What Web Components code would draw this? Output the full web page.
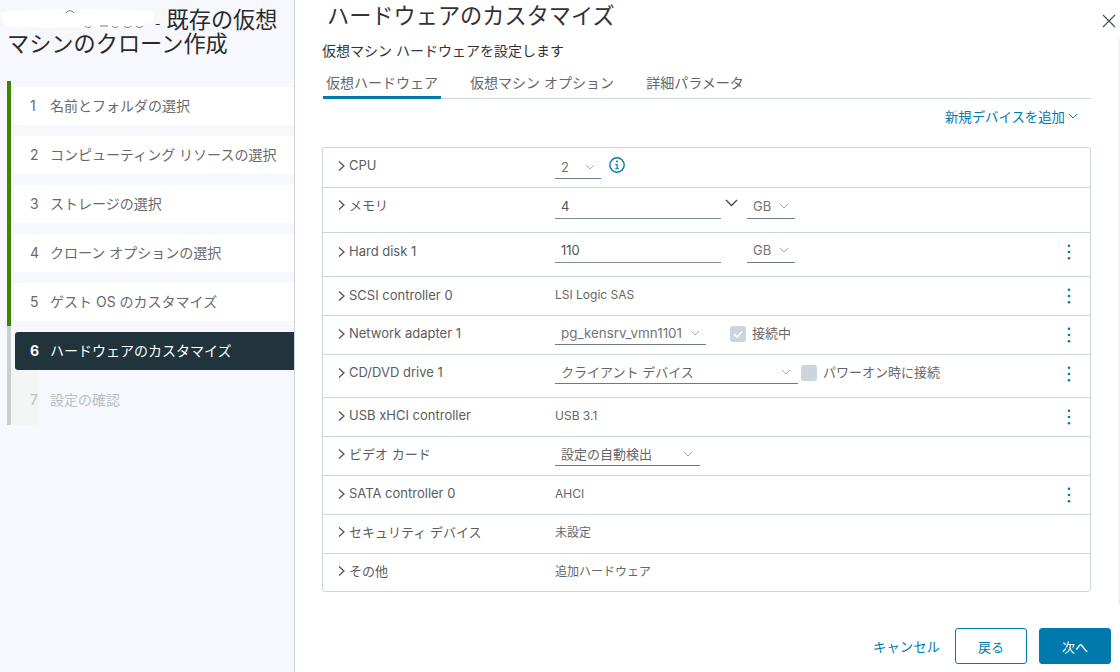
<!DOCTYPE html>
<html lang="ja">
<head>
<meta charset="utf-8">
<title>ハードウェアのカスタマイズ</title>
<style>
    html, body {
        margin: 0;
        height: 100%;
        background: #fff;
        overflow: hidden;
        font-family: Inter, "Noto Sans CJK JP", sans-serif;
        color: #565656;
    }
</style>
</head>
<body>
<wizard-dialog>
    <wizard-nav slot="nav">
        <wizard-step num="1" state="done">名前とフォルダの選択</wizard-step>
        <wizard-step num="2" state="done">コンピューティング リソースの選択</wizard-step>
        <wizard-step num="3" state="done">ストレージの選択</wizard-step>
        <wizard-step num="4" state="done">クローン オプションの選択</wizard-step>
        <wizard-step num="5" state="done">ゲスト OS のカスタマイズ</wizard-step>
        <wizard-step num="6" state="active">ハードウェアのカスタマイズ</wizard-step>
        <wizard-step num="7" state="disabled">設定の確認</wizard-step>
    </wizard-nav>

    <hw-tabs slot="tabs">
        <span class="on" style="width:118px">仮想ハードウェア</span>
        <span style="width:144px;margin-left:29px">仮想マシン オプション</span>
        <span style="width:98px;margin-left:32px">詳細パラメータ</span>
    </hw-tabs>

    <hw-table>
        <hw-row label="CPU" style="height:40px">
            <drop-select style="width:46px;margin-top:7px" size="24">2</drop-select>
            <info-icon style="margin:9px 0 0 8px"></info-icon>
        </hw-row>
        <hw-row label="メモリ" style="height:45px;--lt:6px">
            <text-field style="width:166px;margin-top:6px">4</text-field>
            <dark-chevron></dark-chevron>
            <drop-select style="width:48px;margin:6px 0 0 0" size="25">GB</drop-select>
        </hw-row>
        <hw-row label="Hard disk 1" menu style="height:44px;--lt:8px">
            <text-field style="width:166px;margin-top:5px">110</text-field>
            <drop-select style="width:48px;margin:5px 0 0 26px" size="25">GB</drop-select>
        </hw-row>
        <hw-row label="SCSI controller 0" menu style="height:39px;--lt:8px">
            <small-val>LSI Logic SAS</small-val>
        </hw-row>
        <hw-row label="Network adapter 1" menu style="height:39px">
            <drop-select style="width:151px;margin-top:5px" size="24" tiny>pg_kensrv_vmn1101</drop-select>
            <check-box checked style="margin:10px 0 0 24px">接続中</check-box>
        </hw-row>
        <hw-row label="CD/DVD drive 1" menu style="height:43px">
            <drop-select style="width:243px;margin-top:5px" size="24" wide>クライアント デバイス</drop-select>
            <check-box style="margin:10px 0 0 3px">パワーオン時に接続</check-box>
        </hw-row>
        <hw-row label="USB xHCI controller" menu style="height:39px">
            <small-val>USB 3.1</small-val>
        </hw-row>
        <hw-row label="ビデオ カード" style="height:39px;--lt:6px">
            <drop-select style="width:145px;margin-top:5px" size="24" wide>設定の自動検出</drop-select>
        </hw-row>
        <hw-row label="SATA controller 0" menu style="height:39px">
            <small-val>AHCI</small-val>
        </hw-row>
        <hw-row label="セキュリティ デバイス" style="height:39px;--lt:6px">
            <small-val>未設定</small-val>
        </hw-row>
        <hw-row label="その他" last style="height:37px;--lt:6px">
            <small-val>追加ハードウェア</small-val>
        </hw-row>
    </hw-table>
</wizard-dialog>

<script>
/**
 * Custom elements for the clone wizard, hardware step
 */

const chevronSvg = (w, color) => `<svg width="${w}" height="${w}" viewBox="0 0 10 10" fill="none" stroke="${color}" stroke-width="1"><path d="M1 3l4 4 4-4"/></svg>`;

// dialog frame: left nav column, right pane
const dialogTemplate = document.createElement("template");
dialogTemplate.innerHTML = `
    <style>
        :host {
            display: flex;
            width: 1120px;
            height: 672px;
            position: relative;
        }
        aside {
            width: 294px;
            flex: none;
            box-sizing: content-box;
            background: #f6f8fe;
            border-right: 1px solid #c9d4de;
            position: relative;
        }
        .title {
            margin: 0;
            padding: 8px 0 0 7px;
            font-size: 22.2px;
            line-height: 24px;
            font-weight: 400;
            color: #2b2b2b;
            height: 49px;
        }
        .blank { display: inline-block; width: 148px; }
        .dash { font-size: 12px; line-height: 0; margin-right: 6px; }
        .blot { position: absolute; left: 0; top: 6px; }
        main {
            flex: 1;
            padding: 0 29px 0 27px;
            min-width: 0;
            position: relative;
        }
        h2 {
            margin: 0;
            padding: 4px 0 0 5px;
            font-size: 22.2px;
            line-height: 24px;
            font-weight: 400;
            color: #333;
        }
        .sub {
            margin: 13px 0 11px;
            font-size: 14px;
            line-height: 20px;
            color: #333;
        }
        .add {
            display: flex;
            justify-content: flex-end;
            align-items: center;
            gap: 3px;
            height: 34px;
            padding: 0 13px 2px 0;
            font-size: 13.4px;
            color: #0079ad;
            margin-bottom: 12px;
        }
        .close { position: absolute; right: 4px; top: 14px; }
        .bar {
            position: absolute;
            right: 0;
            top: 39px;
            width: 2px;
            height: 565px;
            background: #f1f1f1;
        }
        footer {
            display: flex;
            justify-content: flex-end;
            align-items: center;
            margin: 36px -20px 0 0;
            height: 36px;
            font-size: 13px;
        }
        .cancel { color: #0079ad; margin-right: 15px; font-size: 13.4px; }
        .btn {
            width: 72px;
            height: 36px;
            box-sizing: border-box;
            border-radius: 3px;
            border: 1px solid #0079ad;
            color: #0079ad;
            display: flex;
            align-items: center;
            justify-content: center;
        }
        .btn.primary { background: #0079ad; color: #fff; margin-left: 12px; }
    </style>
    <aside>
        <h1 class="title"><span class="blank"></span><span class="dash">-</span>既存の仮想<br>マシンのクローン作成</h1>
        <svg class="blot" width="160" height="24" viewBox="0 0 160 24">
            <path d="M3 6C30 2 120 3 150 5c4 2 5 8 2 11-2 4-30 5-60 5-30 1-70 1-86-1C2 16 0 9 3 6z" fill="#fff"/>
            <path d="M66 7c2-3 6-3 8 0M85 20c2 2 5 2 6 0M100 20h8M112 20c2 2 5 2 6 0M124 20c2 2 5 2 7 0M136 20c2 2 5 2 7 0" fill="none" stroke="#777" stroke-width="1"/>
        </svg>
        <slot name="nav"></slot>
    </aside>
    <main>
        <h2>ハードウェアのカスタマイズ</h2>
        <div class="sub">仮想マシン ハードウェアを設定します</div>
        <slot name="tabs"></slot>
        <div class="add">新規デバイスを追加 ${chevronSvg(10, "#0079ad")}</div>
        <slot></slot>
        <footer>
            <span class="cancel">キャンセル</span>
            <span class="btn">戻る</span>
            <span class="btn primary">次へ</span>
        </footer>
        <svg class="close" width="14" height="14" viewBox="0 0 14 14" stroke="#444f57" stroke-width="1.2"><path d="M1 1l12 12M13 1L1 13"/></svg>
        <div class="bar"></div>
    </main>
`;

class WizardDialog extends HTMLElement {
    constructor() {
        super();
        const shadow = this.attachShadow({ mode: "open" });
        shadow.append(dialogTemplate.content.cloneNode(true));
    }
}

// nav list
class WizardNav extends HTMLElement {
    constructor() {
        super();
        this.attachShadow({ mode: "open" }).innerHTML = `
            <style>
                :host { display: block; padding: 24px 0 0 7px; }
            </style>
            <slot></slot>`;
    }
}

// one step of the wizard: rail on the left, white card
class WizardStep extends HTMLElement {
    constructor() {
        super();
        const num = this.getAttribute("num");
        this.attachShadow({ mode: "open" }).innerHTML = `
            <style>
                :host {
                    display: block;
                    height: 49px;
                    border-left: 4px solid #c9d0d2;
                    padding: 6px 0 5px 4px;
                    box-sizing: border-box;
                    font-size: 14px;
                    color: #6a6a6a;
                }
                :host([state=done]) { border-left-color: #3c8500; }
                :host([state=active]) {
                    background: linear-gradient(#f4f6f6, #f4f6f6) 0 100% / 28px 5px no-repeat;
                }
                :host([state=disabled]) {
                    height: 50px;
                    color: #b9c0c5;
                    background: linear-gradient(#f4f6f6, #f4f6f6) 0 0 / 28px 100% no-repeat;
                }
                .card {
                    height: 38px;
                    box-sizing: border-box;
                    padding: 0 0 2px 15px;
                    display: flex;
                    align-items: center;
                    border-radius: 3px 0 0 3px;
                }
                :host([state=done]) .card { background: #fff; }
                :host([state=active]) .card { background: #21333b; color: #fff; }
                :host([state=active]) b { font-weight: 700; }
                b { font-weight: 400; width: 20px; flex: none; }
            </style>
            <div class="card"><b>${num}</b><slot></slot></div>`;
    }
}

// tab strip
class HwTabs extends HTMLElement {
    constructor() {
        super();
        this.attachShadow({ mode: "open" }).innerHTML = `
            <style>
                :host {
                    display: flex;
                    height: 26px;
                    margin: 0 0 0 1px;
                    border-bottom: 1px solid #ccd6dd;
                    font-size: 14px;
                    color: #666;
                }
                ::slotted(span) {
                    display: block;
                    height: 27px;
                    line-height: 22px;
                    text-align: center;
                    box-sizing: border-box;
                }
                ::slotted(.on) { border-bottom: 3px solid #0079ad; }
            </style>
            <slot></slot>`;
    }
}

class HwTable extends HTMLElement {
    constructor() {
        super();
        this.attachShadow({ mode: "open" }).innerHTML = `
            <style>
                :host {
                    display: block;
                    border: 1px solid #ccd6dd;
                    border-radius: 3px;
                }
            </style>
            <slot></slot>`;
    }
}

// one device row: label column, value column, optional kebab menu
class HwRow extends HTMLElement {
    constructor() {
        super();
        const menu = this.hasAttribute("menu")
            ? `<svg class="menu" width="4" height="16" viewBox="0 0 4 16" fill="#0079ad"><circle cx="2" cy="1.7" r="1.3"/><circle cx="2" cy="8" r="1.3"/><circle cx="2" cy="14.3" r="1.3"/></svg>`
            : "";
        this.attachShadow({ mode: "open" }).innerHTML = `
            <style>
                :host {
                    display: flex;
                    box-sizing: border-box;
                    border-bottom: 1px solid #ccd6dd;
                    font-size: 13px;
                    color: #5c5c5c;
                }
                :host([last]) { border-bottom: 0; }
                .label {
                    width: 232px;
                    flex: none;
                    display: flex;
                    align-items: center;
                    height: 20px;
                    margin-top: var(--lt, 7px);
                    padding-left: 15px;
                    box-sizing: border-box;
                    gap: 4px;
                }
                .label svg { margin-top: 2px; }
                .value { flex: 1; display: flex; align-items: flex-start; min-width: 0; }
                .menu { margin: 11px 19px 0 1px; flex: none; }
            </style>
            <div class="label">
                <svg width="7" height="12" viewBox="0 0 7 12" fill="none" stroke="#555" stroke-width="1.3"><path d="M1 1.5L6 6 1 10.5"/></svg>
                <span>${this.getAttribute("label")}</span>
            </div>
            <div class="value"><slot></slot></div>
            ${menu}`;
    }
}

// select with underline and a thin chevron at its right end
class DropSelect extends HTMLElement {
    constructor() {
        super();
        const size = this.getAttribute("size") || 24;
        this.attachShadow({ mode: "open" }).innerHTML = `
            <style>
                :host {
                    display: flex;
                    flex: none;
                    align-items: center;
                    box-sizing: border-box;
                    border-bottom: 1px solid #6b7a83;
                    padding: 0 6px;
                    height: ${size}px;
                    font-size: 13px;
                    color: #747474;
                    white-space: nowrap;
                }
                :host([tiny]) { font-size: 13.4px; }
                :host([wide]) { color: #666; }
                :host([wide]) svg { margin-right: 1px; }
                svg { margin-left: auto; flex: none; }
            </style>
            <slot></slot>${chevronSvg(10, "#a9b0b5")}`;
    }
}

class TextField extends HTMLElement {
    constructor() {
        super();
        this.attachShadow({ mode: "open" }).innerHTML = `
            <style>
                :host {
                    display: flex;
                    flex: none;
                    align-items: center;
                    box-sizing: border-box;
                    border-bottom: 1px solid #7d8890;
                    padding-left: 6px;
                    height: 25px;
                    font-size: 13px;
                    color: #565656;
                }
            </style>
            <slot></slot>`;
    }
}

class DarkChevron extends HTMLElement {
    constructor() {
        super();
        this.attachShadow({ mode: "open" }).innerHTML = `
            <style>
                :host { display: block; flex: none; width: 26px; height: 20px; margin-top: 6px; padding-left: 4px; box-sizing: border-box; }
            </style>
            <svg width="13" height="8" viewBox="0 0 13 8" fill="none" stroke="#444" stroke-width="1.3"><path d="M1 1l5.5 5.5L12 1"/></svg>`;
    }
}

class InfoIcon extends HTMLElement {
    constructor() {
        super();
        this.attachShadow({ mode: "open" }).innerHTML = `
            <style>:host { display: block; flex: none; width: 16px; height: 16px; }</style>
            <svg width="16" height="16" viewBox="0 0 16 16">
                <circle cx="8" cy="8" r="7.2" fill="none" stroke="#0079ad" stroke-width="1.4"/>
                <circle cx="8" cy="4.6" r="1" fill="#0079ad"/>
                <path d="M6.3 7h2.4v4.2h1.2v1H6.3v-1h1.2V8H6.3z" fill="#0079ad"/>
            </svg>`;
    }
}

class CheckBox extends HTMLElement {
    constructor() {
        super();
        const tick = this.hasAttribute("checked")
            ? `<svg width="16" height="16" viewBox="0 0 16 16" fill="none" stroke="#fff" stroke-width="1.8"><path d="M4 8.2l3 2.8 5-5.5"/></svg>`
            : "";
        this.attachShadow({ mode: "open" }).innerHTML = `
            <style>
                :host {
                    display: flex;
                    flex: none;
                    align-items: center;
                    gap: 6px;
                    height: 16px;
                    font-size: 13px;
                    color: #666;
                    white-space: nowrap;
                }
                .box { width: 16px; height: 16px; border-radius: 3px; background: #ccd4dc; }
                .text { padding-bottom: 4px; }
                svg { display: block; }
            </style>
            <span class="box">${tick}</span><span class="text"><slot></slot></span>`;
    }
}

class SmallVal extends HTMLElement {
    constructor() {
        super();
        this.attachShadow({ mode: "open" }).innerHTML = `
            <style>
                :host { display: block; margin-top: 8px; line-height: 20px; font-size: 12px; color: #666; }
            </style>
            <slot></slot>`;
    }
}

// define custom elements in the HTML
customElements.define("wizard-dialog", WizardDialog);
customElements.define("wizard-nav", WizardNav);
customElements.define("wizard-step", WizardStep);
customElements.define("hw-tabs", HwTabs);
customElements.define("hw-table", HwTable);
customElements.define("hw-row", HwRow);
customElements.define("drop-select", DropSelect);
customElements.define("text-field", TextField);
customElements.define("dark-chevron", DarkChevron);
customElements.define("info-icon", InfoIcon);
customElements.define("check-box", CheckBox);
customElements.define("small-val", SmallVal);
</script>
</body>
</html>
